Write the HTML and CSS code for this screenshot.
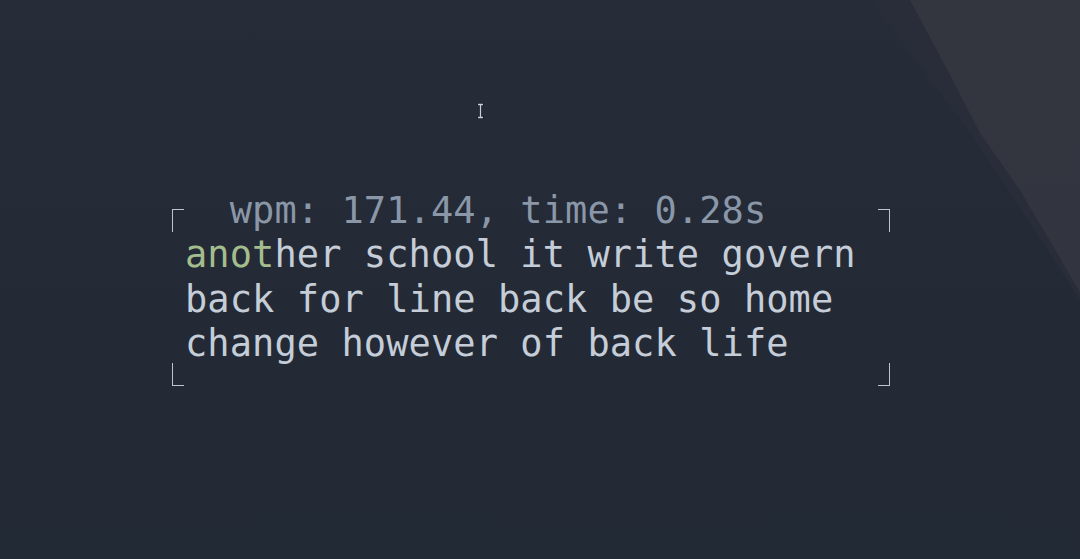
FILE: index.html
```html
<!DOCTYPE html>
<html>
<head>
<meta charset="utf-8">
<link rel="stylesheet" href="styles.css">
</head>
<body>
<div class="screen">
  <div class="shade"></div>
  <div class="shade-light"></div>
  <svg class="ibeam" width="9" height="16" viewBox="0 0 9 16">
    <path d="M1 1.5h7M1 14.5h7M4.5 1.5v13" stroke="#1b2029" stroke-width="3" fill="none"/>
    <path d="M2 1.5h5M2 14.5h5M4.5 1.5v13" stroke="#c9cfd7" stroke-width="1.3" fill="none"/>
  </svg>
  <div class="frame">
    <span class="corner tl"></span>
    <span class="corner tr"></span>
    <span class="corner bl"></span>
    <span class="corner br"></span>
    <div class="text">
      <div class="line stats">  wpm: 171.44, time: 0.28s</div>
      <div class="line"><span class="done">anot</span>her school it write govern</div>
      <div class="line">back for line back be so home</div>
      <div class="line">change however of back life</div>
    </div>
  </div>
</div>
</body>
</html>
```

FILE: styles.css
```css
html, body {
  margin: 0;
  padding: 0;
}
body {
  width: 1080px;
  height: 559px;
  overflow: hidden;
  background: #242b37;
}
.screen {
  position: relative;
  width: 1080px;
  height: 559px;
  overflow: hidden;
  background: linear-gradient(180deg, #262c38 0%, #232a36 60%, #222a36 100%);
  padding-top: 209px;
  padding-left: 172px;
  box-sizing: border-box;
}
.shade {
  position: absolute;
  top: 0;
  right: 0;
  width: 210px;
  height: 320px;
  background: #282d39;
  clip-path: polygon(0px 0px, 210px 0px, 210px 300px, 100px 133px);
}
.shade-light {
  position: absolute;
  top: 0;
  right: 0;
  width: 170px;
  height: 320px;
  background: linear-gradient(180deg, #33353f 0%, #32353f 100%);
  clip-path: polygon(0px 0px, 170px 0px, 170px 292px, 110px 190px, 70px 133px, 40px 75px);
}
.ibeam {
  position: absolute;
  left: 476px;
  top: 103px;
}
.frame {
  position: relative;
  display: flex;
  flex-direction: column;
  width: 718px;
  height: 177px;
  box-sizing: border-box;
  padding-left: 13px;
}
.corner {
  position: absolute;
  width: 11px;
  height: 22px;
  border-color: #bcc4ce;
  border-style: solid;
  border-width: 0;
}
.corner.tl { left: 0; top: 0; border-left-width: 1.5px; border-top-width: 1.5px; }
.corner.tr { right: 0; top: 0; border-right-width: 1.5px; border-top-width: 1.5px; }
.corner.bl { left: 0; bottom: 0; border-left-width: 1.5px; border-bottom-width: 1.5px; }
.corner.br { right: 0; bottom: 0; border-right-width: 1.5px; border-bottom-width: 1.5px; }
.text {
  margin-top: -20px;
  font-family: "DejaVu Sans Mono", monospace;
  font-size: 37px;
  letter-spacing: 0.08px;
  line-height: 44.3px;
  color: #c5cdd8;
}
.line {
  white-space: pre;
}
.stats {
  color: #8a97a8;
}
.done {
  color: #a3be8c;
}
```
